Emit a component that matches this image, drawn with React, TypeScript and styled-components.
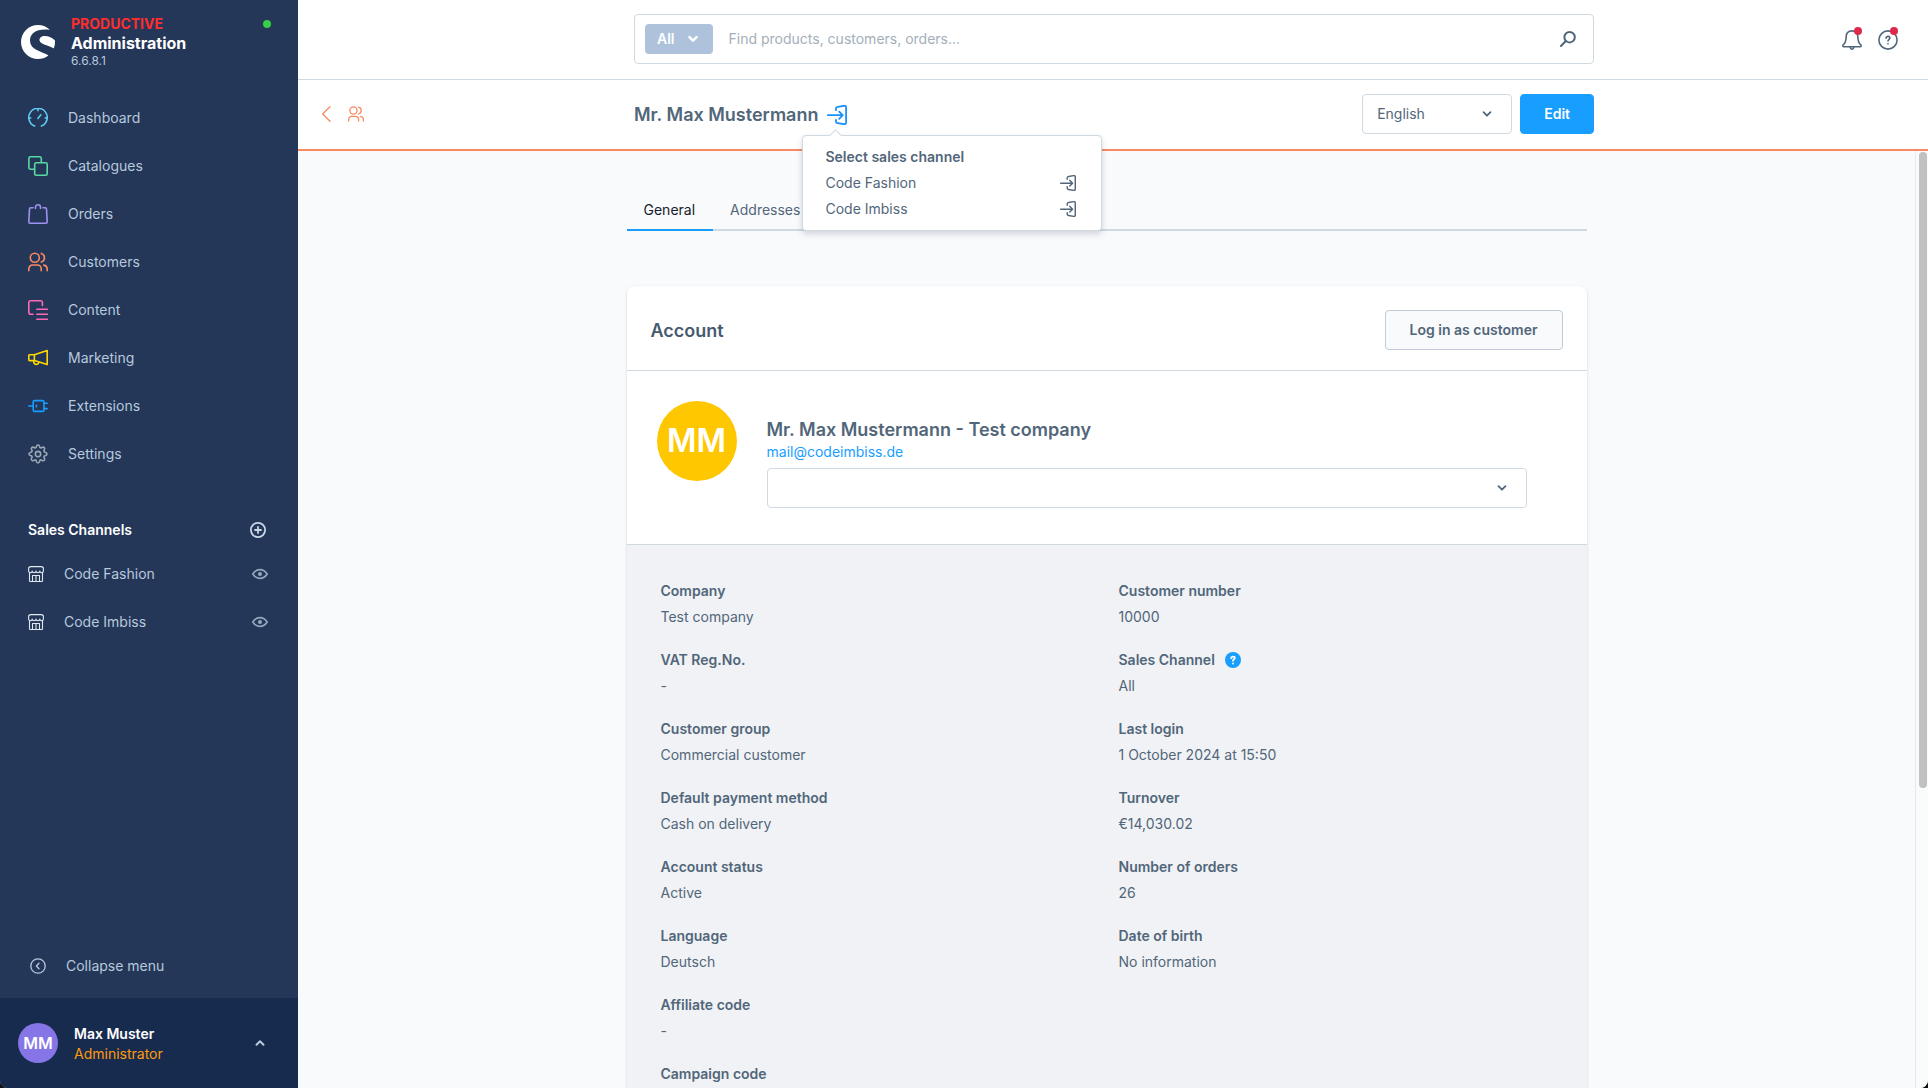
import React from 'react';
import styled, { createGlobalStyle, css } from 'styled-components';
import { SiShopware } from 'react-icons/si';

const c = {
  nav: '#243758',
  navDark: '#172b4e',
  navText: '#b7c9dd',
  text: '#52667a',
  line: '#d1d9e0',
  blue: '#189eff',
  orange: '#f88962',
};

const Global = createGlobalStyle`
  *, *::before, *::after { box-sizing: border-box; }
  body {
    margin: 0;
    background: #111;
    font-family: Inter, "Liberation Sans", sans-serif;
    font-size: 14px;
    line-height: 20px;
    color: ${c.text};
    -webkit-font-smoothing: antialiased;
  }
  button, input, select { font: inherit; color: inherit; }
  button { border: 0; background: none; padding: 0; cursor: pointer; }
  a { color: inherit; text-decoration: none; }
  h1, h2, h3, p, ul, dl, dd { margin: 0; padding: 0; }
  ul { list-style: none; }
  svg { display: block; flex: none; }
`;

/* ---------- icons ---------- */

const Svg = styled.svg.attrs({ fill: 'none', stroke: 'currentColor', strokeLinecap: 'round', strokeLinejoin: 'round' })<{ $w?: number }>`
  stroke-width: ${(p) => p.$w ?? 1.6};
`;

const DashboardIcon = () => (
  <Svg width="20" height="20" viewBox="0 0 20 20">
    <path d="M6.600 18A9.200 9.200 0 1 1 13.400 18M10 .8v2M.8 10h2M17.200 10h2M9.900 10.400l3-3.600" />
  </Svg>
);
const CataloguesIcon = () => (
  <Svg width="20" height="20" viewBox="0 0 20 20">
    <path d="M6.200 13.200H2.400A1.500 1.500 0 0 1 .9 11.700V2.300A1.500 1.500 0 0 1 2.400.8h9.400a1.500 1.500 0 0 1 1.500 1.500v3.500" />
    <rect x="6.700" y="6.700" width="12.500" height="12.500" rx="1.500" />
  </Svg>
);
const OrdersIcon = () => (
  <Svg width="20" height="20" viewBox="0 0 20 20">
    <path d="M5 3.700H2.800c-.8 0-1.300.5-1.300 1.300L.8 17.700c0 .9.600 1.500 1.400 1.500h15.600c.8 0 1.400-.6 1.400-1.500L18.500 5c0-.8-.5-1.300-1.300-1.300H15M7.500 4.500V3.200c0-1.400.9-2.400 2.500-2.400s2.500 1 2.500 2.400v1.300" />
  </Svg>
);
const CustomersIcon = ({ size = 20 }: { size?: number }) => (
  <Svg width={size} height={size} viewBox="0 0 20 20">
    <circle cx="6.800" cy="5.700" r="4.500" />
    <path d="M.8 18.700v-1.900a3.800 3.800 0 0 1 3.800-3.800h4.800a3.800 3.800 0 0 1 3.800 3.800v1.900M13.300 1.400a4.500 4.500 0 0 1 0 8.600M15.800 13.100c2 .4 3.400 1.800 3.400 3.800v1.800" />
  </Svg>
);
const ContentIcon = () => (
  <Svg width="20" height="20" viewBox="0 0 20 20">
    <path d="M5 14.200H2.800a2 2 0 0 1-2-2V2.400a1.600 1.600 0 0 1 1.600-1.600h10.400a1.600 1.600 0 0 1 1.600 1.600v3.200M8.800 9.200h10.500M8.800 14.200h10.500M8.800 19.200h10.500" />
  </Svg>
);
const MarketingIcon = () => (
  <Svg width="20" height="20" viewBox="0 0 20 20">
    <path d="M6.400 6.800 19.200 2.600v14L6.400 12.600M6.400 6.800v5.800M1.600 6.800h4.800v5.800H1.600a.8.800 0 0 1-.8-.8V7.600a.8.800 0 0 1 .8-.8zM5.600 12.800c0 2.200 1 3.600 2.900 3.600 1.400 0 2.200-.8 2.600-2.100" />
  </Svg>
);
const ExtensionsIcon = () => (
  <Svg width="20" height="20" viewBox="0 0 20 20">
    <rect x="5.200" y="4.600" width="10.800" height="10.800" rx="1.500" />
    <path d="M.8 10h4.400M16 7.200h3.200M16 12.600h3.200M8.400 9.400v1.400" />
  </Svg>
);
const SettingsIcon = () => (
  <Svg width="20" height="20" viewBox="0 0 24 24" $w={1.900}>
    <circle cx="12" cy="12" r="3.200" />
    <path d="M10 3.200c.3-1.300.9-2 2-2s1.700.7 2 2l.3 1 1.400.6 1-.6c1.200-.7 2-.7 2.800.1s.8 1.600.1 2.800l-.6 1 .6 1.400 1 .3c1.400.3 2.200.9 2.200 2.200s-.8 1.700-2.200 2l-1 .3-.6 1.400.6 1c.7 1.200.7 2-.1 2.800s-1.600.8-2.800.1l-1-.6-1.400.6-.3 1c-.3 1.400-.9 2.200-2 2.200s-1.700-.8-2-2.200l-.3-1-1.400-.6-1 .6c-1.200.7-2 .7-2.800-.1s-.8-1.600-.1-2.800l.6-1L4.400 14.300l-1-.3c-1.400-.3-2.200-.9-2.200-2s.8-1.900 2.200-2.200l1-.3.6-1.400-.6-1c-.7-1.200-.7-2 .1-2.800s1.600-.8 2.800-.1l1 .6 1.400-.6z" />
  </Svg>
);
const PlusIcon = () => (
  <Svg width="16" height="16" viewBox="0 0 16 16" $w={1.800}>
    <circle cx="8" cy="8" r="7.100" />
    <path d="M8 5v6M5 8h6" />
  </Svg>
);
const ShopIcon = () => (
  <Svg width="16" height="16" viewBox="0 0 16 16" $w={1.100}>
    <path d="M1.500 6.500v8.200a.8.800 0 0 0 .8.800h11.400a.8.800 0 0 0 .8-.8V6.500M.6 5V2.800C.6 1.500 1.500.6 2.800.6h10.400c1.300 0 2.200.9 2.200 2.200V5c0 1-.7 1.700-1.700 1.700-1.100 0-1.900-.7-1.900-1.700 0 1-.8 1.700-1.900 1.700S8 6 8 5c0 1-.8 1.700-1.900 1.700S4.200 6 4.200 5c0 1-.8 1.700-1.900 1.700C1.300 6.700.6 6 .6 5zM4.500 15.300V9.500h7v5.800M8 9.500v5.800" />
  </Svg>
);
const EyeIcon = () => (
  <Svg width="16" height="16" viewBox="0 0 16 16">
    <path d="M.8 8C2.800 5 5.200 3.600 8 3.600S13.200 5 15.200 8C13.200 11 10.800 12.400 8 12.400S2.800 11 .8 8z" />
    <circle cx="8" cy="8" r="1.200" fill="currentColor" />
  </Svg>
);
const CollapseIcon = () => (
  <Svg width="16" height="16" viewBox="0 0 16 16" $w={1.300}>
    <circle cx="8" cy="8" r="7.200" />
    <path d="M9 5.200 6.400 8 9 10.800" />
  </Svg>
);
const ChevronIcon = ({ up, w = 2 }: { up?: boolean; w?: number }) => (
  <Svg width="10" height="10" viewBox="0 0 10 10" $w={w}>
    <path d={up ? 'M1.500 6.800 5 3.300l3.500 3.500' : 'M1.500 3.200 5 6.700l3.500-3.500'} />
  </Svg>
);
const BackIcon = () => (
  <Svg width="16" height="16" viewBox="0 0 16 16" $w={1.300}>
    <path d="M12 .7 4.700 8l7.300 7.300" />
  </Svg>
);
const LoginIcon = ({ size = 16 }: { size?: number }) => (
  <Svg width={size} height={size} viewBox="0 0 20 20" $w={1.800}>
    <path d="M.8 10.200h14.600M12.200 6.600l3.500 3.600-3.500 3.600M9 5.200V3.600c0-1.100.6-1.700 1.700-1.800l6.500-1c1.200-.2 1.900.4 1.900 1.600v15.200c0 1.200-.7 1.800-1.900 1.600l-6.500-1c-1.100-.1-1.700-.7-1.700-1.800v-1.600" />
  </Svg>
);
const SearchIcon = () => (
  <Svg width="16" height="16" viewBox="0 0 16 16" $w={2}>
    <circle cx="9.600" cy="6.200" r="5.200" />
    <path d="M5.800 10 1 15" />
  </Svg>
);
const BellIcon = () => (
  <Svg width="20" height="20" viewBox="0 0 20 20">
    <path d="M10 .9C6.400.9 4.200 3 4.200 6.400c0 4.600-.9 6.600-3 8.400-.7.700-.4 2 .6 2h16.400c1 0 1.300-1.300.6-2-2.100-1.800-3-3.800-3-8.400C15.800 3 13.600.9 10 .9zM8.200 17.400c.2 1.200.9 1.800 1.800 1.800s1.600-.6 1.800-1.800" />
  </Svg>
);
const HelpIcon = () => (
  <Svg width="20" height="20" viewBox="0 0 20 20">
    <circle cx="10" cy="10" r="9.100" />
    <path d="M8.100 8.300c0-1.100.8-1.900 1.900-1.900s1.900.7 1.900 1.700c0 1.400-1.900 1.500-1.900 2.900M10 13.600v.1" />
  </Svg>
);
const HelpBadgeIcon = () => (
  <Svg width="16" height="16" viewBox="0 0 16 16" $w={1.800}>
    <circle cx="8" cy="8" r="8" fill={c.blue} stroke="none" />
    <path stroke="#fff" d="M6.200 6.200c0-1 .8-1.600 1.800-1.600s1.800.6 1.800 1.500C9.800 7.300 8 7.400 8 8.700M8 11.500v.1" />
  </Svg>
);

/* ---------- shell ---------- */

const Shell = styled.div`
  display: flex;
  height: 100vh;
  overflow: hidden;
  border-radius: 0 0 8px 8px;
  background: #f9fafb;
`;

const Sidebar = styled.aside`
  flex: none;
  display: flex;
  flex-direction: column;
  width: 298px;
  background: ${c.nav};
  color: ${c.navText};
`;

const Brand = styled.div`
  display: flex;
  align-items: flex-start;
  gap: 16px;
  padding: 14px 27px 24px 21px;
`;
const Logo = styled(SiShopware)`
  width: 34px;
  height: 34px;
  margin-top: 11px;
  color: #fff;
`;
const BrandText = styled.div`
  flex: 1;
  color: #fff;
`;
const Stage = styled.p`
  font-weight: 700;
  color: #ff2d2d;
`;
const Product = styled.p`
  font-size: 16px;
  font-weight: 700;
  line-height: 18px;
`;
const Version = styled.p`
  font-size: 12px;
  line-height: 18px;
  color: ${c.navText};
`;
const StatusDot = styled.span`
  width: 8px;
  height: 8px;
  margin-top: 6px;
  border-radius: 50%;
  background: #37d046;
`;

const NavLink = styled.a<{ $tone: string }>`
  display: flex;
  align-items: center;
  gap: 20px;
  height: 48px;
  padding: 0 28px;
  svg { color: ${(p) => p.$tone}; }
`;

const ChannelHead = styled.div`
  display: flex;
  align-items: center;
  justify-content: space-between;
  height: 41px;
  margin-top: 31px;
  padding: 0 32px 0 28px;
  h2 {
    font-size: 14px;
    font-weight: 600;
    line-height: 20px;
    color: #fff;
  }
  button { color: #c9d7e6; }
`;
const Channel = styled.li`
  display: flex;
  align-items: center;
  height: 48px;
  padding: 0 30px 0 28px;
  a {
    display: flex;
    flex: 1;
    gap: 20px;
    align-items: center;
  }
  a svg { color: #e0e8f0; }
  button { color: #94a9c0; }
`;
const Collapse = styled.button`
  display: flex;
  align-items: center;
  gap: 20px;
  height: 64px;
  margin-top: auto;
  padding: 0 30px;
`;
const User = styled.button`
  display: flex;
  align-items: center;
  gap: 16px;
  height: 90px;
  padding: 0 33px 0 18px;
  background: ${c.navDark};
  text-align: left;
`;
const Avatar = styled.span<{ $size: number; $bg: string }>`
  flex: none;
  display: grid;
  place-items: center;
  width: ${(p) => p.$size}px;
  height: ${(p) => p.$size}px;
  border-radius: 50%;
  background: ${(p) => p.$bg};
  color: #fff;
  font-size: ${(p) => (p.$size > 40 ? 32 : 16)}px;
  font-weight: 600;
`;
const UserText = styled.span`
  flex: 1;
  display: flex;
  flex-direction: column;
  padding-top: 2px;
  color: #fe9a0d;
  strong {
    font-weight: 600;
    color: #fff;
  }
`;

/* ---------- main ---------- */

const Main = styled.main`
  flex: 1;
  min-width: 0;
  display: flex;
  flex-direction: column;
`;
const barGrid = css`
  display: grid;
  grid-template-columns: 1fr minmax(0, 960px) 1fr;
  align-items: center;
  background: #fff;
`;
const heading = css`
  padding-top: 2px;
  font-size: 18px;
  font-weight: 600;
  line-height: 24px;
`;
const TopBar = styled.header`
  ${barGrid}
  padding: 14px 30px 15px 32px;
  border-bottom: 1px solid ${c.line};
`;
const Search = styled.form`
  grid-column: 2;
  display: flex;
  align-items: center;
  gap: 16px;
  height: 50px;
  padding: 0 17px 0 10px;
  border: 1px solid ${c.line};
  border-radius: 4px;
  color: ${c.text};
`;
const Scope = styled.button`
  display: flex;
  align-items: center;
  gap: 13px;
  height: 30px;
  padding: 0 15px 0 12px;
  border-radius: 4px;
  background: #aec3db;
  color: #fff;
  font-weight: 600;
`;
const SearchInput = styled.input`
  flex: 1;
  min-width: 0;
  border: 0;
  padding: 0;
  outline: 0;
  background: none;
  &::placeholder { color: #a3afbb; opacity: 1; }
`;
const Tools = styled.div`
  display: flex;
  justify-content: flex-end;
  gap: 16px;
  padding-top: 2px;
`;
const Tool = styled.button`
  position: relative;
  &::after {
    content: '';
    position: absolute;
    top: -3px;
    right: 0;
    width: 8px;
    height: 8px;
    border-radius: 50%;
    background: #de294c;
  }
`;

const PageBar = styled.div`
  ${barGrid}
  padding: 14px 18px 15px 20px;
  border-bottom: 2px solid ${c.orange};
`;
const Back = styled.a`
  display: flex;
  gap: 14px;
  color: ${c.orange};
`;
const BarContent = styled.div`
  display: flex;
  align-items: center;
`;
const Title = styled.h1`
  ${heading}
`;
const LoginAs = styled.div`
  position: relative;
  margin: 0 auto 0 9px;
  padding-top: 2px;
  > button {
    display: block;
    color: #1890ff;
  }
`;
const Popover = styled.div`
  position: absolute;
  z-index: 2;
  top: 32px;
  left: -25px;
  width: 300px;
  padding: 8px 25px 8px 22px;
  border: 1px solid ${c.line};
  border-radius: 4px;
  background: #fff;
  box-shadow: 0 3px 6px rgba(60, 80, 110, 0.22);
  &::before {
    content: '';
    position: absolute;
    top: -5px;
    left: 28px;
    width: 9px;
    height: 9px;
    border: solid ${c.line};
    border-width: 1px 0 0 1px;
    background: #fff;
    transform: rotate(45deg);
  }
  h2, button {
    font-size: 14px;
    line-height: 26px;
  }
  h2 { font-weight: 600; }
  button {
    display: flex;
    align-items: center;
    justify-content: space-between;
    width: 100%;
  }
`;

const SelectBox = styled.div`
  display: grid;
  align-items: center;
  > * { grid-area: 1 / 1; }
  svg {
    justify-self: end;
    margin-right: 20px;
    pointer-events: none;
  }
`;
const LanguageBox = styled(SelectBox)`
  width: 150px;
  margin-right: 8px;
`;
const Select = styled.select`
  appearance: none;
  width: 100%;
  height: 40px;
  padding: 0 40px 0 14px;
  border: 1px solid ${c.line};
  border-radius: 4px;
  background: #fff;
`;
const Button = styled.button<{ $primary?: boolean }>`
  height: 40px;
  padding: 0 ${(p) => (p.$primary ? 23 : 24)}px;
  border: 1px solid ${(p) => (p.$primary ? c.blue : '#bfcbd8')};
  border-radius: 4px;
  background: ${(p) => (p.$primary ? c.blue : '#f9fafb')};
  color: ${(p) => (p.$primary ? '#fff' : c.text)};
  font-weight: 600;
`;

const Body = styled.div`
  flex: 1;
  min-height: 0;
  display: flex;
`;
const Scroll = styled.div`
  flex: 1;
  overflow: hidden;
`;
const Track = styled.div`
  flex: none;
  width: 13px;
  padding: 1px 1px 0 3px;
  border-left: 1px solid #e6e8ea;
  background: #fafbfb;
`;
const Thumb = styled.div`
  height: 68%;
  border-radius: 4px;
  background: #c1c1c1;
`;
const Content = styled.div`
  max-width: 960px;
  margin: 0 auto;
  padding-top: 39px;
`;
const Tabs = styled.nav`
  display: flex;
  border-bottom: 2px solid ${c.line};
`;
const Tab = styled.a<{ $active?: boolean }>`
  height: 41px;
  margin-bottom: -2px;
  padding: 0 18px 0 17px;
  border-bottom: 2px solid ${(p) => (p.$active ? c.blue : 'transparent')};
  color: ${(p) => (p.$active ? '#16212e' : 'inherit')};
  line-height: 40px;
`;

const Card = styled.section`
  margin-top: 55px;
  border-radius: 8px;
  background: #fff;
  box-shadow: 0 1px 3px rgba(0, 0, 0, 0.16);
`;
const CardHead = styled.header`
  display: flex;
  align-items: center;
  justify-content: space-between;
  padding: 24px 24px 20px;
  border-bottom: 1px solid ${c.line};
  h2 {
    ${heading}
    color: #475a6d;
  }
`;
const Profile = styled.div`
  display: flex;
  align-items: flex-start;
  gap: 30px;
  padding: 30px 60px 36px 30px;
  border-bottom: 1px solid ${c.line};
`;
const ProfileText = styled.div`
  flex: 1;
  padding-top: 15px;
  h3 { ${heading} }
  a { color: ${c.blue}; }
  ${SelectBox} { margin-top: 6px; }
`;
const Facts = styled.dl`
  display: grid;
  grid-template-columns: 1fr 1fr;
  gap: 17px 24px;
  padding: 33px 34px;
  background: #f0f2f5;
`;
const Fact = styled.div<{ $col: number }>`
  grid-column: ${(p) => p.$col};
  line-height: 26px;
  dt {
    display: flex;
    align-items: center;
    gap: 10px;
    font-weight: 600;
  }
`;

const menu: [string, string, React.ReactNode][] = [
  ['Dashboard', '#5ecbf0', <DashboardIcon />],
  ['Catalogues', '#57d9a3', <CataloguesIcon />],
  ['Orders', '#a092f0', <OrdersIcon />],
  ['Customers', '#f88962', <CustomersIcon />],
  ['Content', '#ff68b4', <ContentIcon />],
  ['Marketing', '#ffd700', <MarketingIcon />],
  ['Extensions', '#189eff', <ExtensionsIcon />],
  ['Settings', '#9aa8b5', <SettingsIcon />],
];

const channels = ['Code Fashion', 'Code Imbiss'];

const facts: [string, string][] = [
  ['Company', 'Test company'],
  ['Customer number', '10000'],
  ['VAT Reg.No.', '-'],
  ['Sales Channel', 'All'],
  ['Customer group', 'Commercial customer'],
  ['Last login', '1 October 2024 at 15:50'],
  ['Default payment method', 'Cash on delivery'],
  ['Turnover', '€14,030.02'],
  ['Account status', 'Active'],
  ['Number of orders', '26'],
  ['Language', 'Deutsch'],
  ['Date of birth', 'No information'],
];
const codes: [string, string][] = [
  ['Affiliate code', '-'],
  ['Campaign code', ''],
];

export default function App() {
  return (
    <>
      <Global />
      <Shell>
        <Sidebar>
          <Brand>
            <Logo />
            <BrandText>
              <Stage>PRODUCTIVE</Stage>
              <Product>Administration</Product>
              <Version>6.6.8.1</Version>
            </BrandText>
            <StatusDot />
          </Brand>
          <nav>
            {menu.map(([label, tone, icon]) => (
              <NavLink key={label} href="#" $tone={tone}>
                {icon}
                {label}
              </NavLink>
            ))}
          </nav>
          <ChannelHead>
            <h2>Sales Channels</h2>
            <button aria-label="Add sales channel"><PlusIcon /></button>
          </ChannelHead>
          <ul>
            {channels.map((name) => (
              <Channel key={name}>
                <a href="#"><ShopIcon />{name}</a>
                <button aria-label={`View ${name}`}><EyeIcon /></button>
              </Channel>
            ))}
          </ul>
          <Collapse><CollapseIcon />Collapse menu</Collapse>
          <User>
            <Avatar $size={40} $bg="#8575e6">MM</Avatar>
            <UserText>
              <strong>Max Muster</strong>
              Administrator
            </UserText>
            <ChevronIcon up />
          </User>
        </Sidebar>

        <Main>
          <TopBar>
            <Search>
              <Scope type="button">All<ChevronIcon w={2.500} /></Scope>
              <SearchInput aria-label="Search" placeholder="Find products, customers, orders..." />
              <button type="button" aria-label="Start search"><SearchIcon /></button>
            </Search>
            <Tools>
              <Tool aria-label="Notifications"><BellIcon /></Tool>
              <Tool aria-label="Help"><HelpIcon /></Tool>
            </Tools>
          </TopBar>

          <PageBar>
            <Back href="#" aria-label="Back to customers">
              <BackIcon />
              <CustomersIcon size={16} />
            </Back>
            <BarContent>
              <Title>Mr. Max Mustermann</Title>
              <LoginAs>
                <button aria-label="Log in as customer"><LoginIcon size={20} /></button>
                <Popover>
                  <h2>Select sales channel</h2>
                  {channels.map((name) => (
                    <button key={name}>{name}<LoginIcon /></button>
                  ))}
                </Popover>
              </LoginAs>
              <LanguageBox>
                <Select aria-label="Language"><option>English</option></Select>
                <ChevronIcon w={1.800} />
              </LanguageBox>
              <Button $primary>Edit</Button>
            </BarContent>
          </PageBar>

          <Body>
            <Scroll>
              <Content>
                <Tabs>
                  <Tab href="#" $active>General</Tab>
                  <Tab href="#">Addresses</Tab>
                </Tabs>
                <Card>
                  <CardHead>
                    <h2>Account</h2>
                    <Button>Log in as customer</Button>
                  </CardHead>
                  <Profile>
                    <Avatar $size={80} $bg="#ffc700">MM</Avatar>
                    <ProfileText>
                      <h3>Mr. Max Mustermann - Test company</h3>
                      <a href="#">mail@codeimbiss.de</a>
                      <SelectBox>
                        <Select aria-label="Customer tags"><option /></Select>
                        <ChevronIcon w={1.800} />
                      </SelectBox>
                    </ProfileText>
                  </Profile>
                  <Facts>
                    {facts.map(([label, value], i) => (
                      <Fact key={label} $col={(i % 2) + 1}>
                        <dt>
                          {label}
                          {label === 'Sales Channel' && <HelpBadgeIcon />}
                        </dt>
                        <dd>{value}</dd>
                      </Fact>
                    ))}
                    {codes.map(([label, value]) => (
                      <Fact key={label} $col={1}>
                        <dt>{label}</dt>
                        <dd>{value}</dd>
                      </Fact>
                    ))}
                  </Facts>
                </Card>
              </Content>
            </Scroll>
            <Track><Thumb /></Track>
          </Body>
        </Main>
      </Shell>
    </>
  );
}
